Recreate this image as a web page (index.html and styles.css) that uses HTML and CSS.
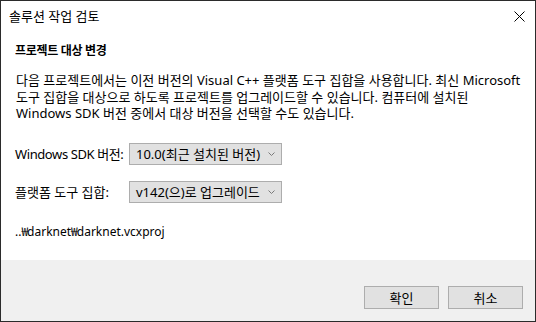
FILE: index.html
```html
<!DOCTYPE html>
<html lang="ko">
  <head>
    <meta charset="UTF-8" />
    <title>솔루션 작업 검토</title>
    <link rel="stylesheet" href="styles.css">
  </head>
  <body>
    <div class="window">
      <div class="titlebar">
        <span class="title">솔루션 작업 검토</span>
        <span class="close">
          <svg width="11" height="11" viewBox="0 0 11 11">
            <path d="M0.5 0.5 L10.5 10.5 M10.5 0.5 L0.5 10.5" stroke="#000" stroke-width="1" fill="none" />
          </svg>
        </span>
      </div>

      <div class="content">
        <h2>프로젝트 대상 변경</h2>
        <p class="desc">
          다음 프로젝트에서는 이전 버전의 Visual C++ 플랫폼 도구 집합을 사용합니다. 최신 Microsoft<br />
          도구 집합을 대상으로 하도록 프로젝트를 업그레이드할 수 있습니다. 컴퓨터에 설치된<br />
          Windows SDK 버전 중에서 대상 버전을 선택할 수도 있습니다.
        </p>

        <div class="field">
          <label class="label-latin">Windows SDK 버전:</label>
          <div class="select">
            <span>10.0(최근 설치된 버전)</span>
            <svg class="chev" width="7" height="4" viewBox="0 0 7 4">
              <path d="M0.5 0.5 L3.5 3.5 L6.5 0.5" stroke="#7a7a7a" fill="none" />
            </svg>
          </div>
        </div>
        <div class="field">
          <label>플랫폼 도구 집합:</label>
          <div class="select">
            <span>v142(으)로 업그레이드</span>
            <svg class="chev" width="7" height="4" viewBox="0 0 7 4">
              <path d="M0.5 0.5 L3.5 3.5 L6.5 0.5" stroke="#7a7a7a" fill="none" />
            </svg>
          </div>
        </div>

        <div class="path">..<span class="won">₩</span>darknet<span class="won">₩</span>darknet.vcxproj</div>
      </div>

      <div class="footer">
        <button>확인</button>
        <button>취소</button>
      </div>
    </div>
  </body>
</html>
```

FILE: styles.css
```css
:root {
  --border-color: #2b2b2b;
  --footer-bg: #f0f0f0;
  --control-bg: #e1e1e1;
  --control-border: #adadad;
  --text-color: #000000;
  --font-family: "Noto Sans", "Noto Sans CJK KR", sans-serif;
}

* {
  box-sizing: border-box;
}

body {
  margin: 0;
  font-family: var(--font-family);
  font-size: 13px;
  color: var(--text-color);
  background: #ffffff;
}

.window {
  width: 536px;
  height: 322px;
  border: 1px solid var(--border-color);
  background: #ffffff;
  display: flex;
  flex-direction: column;
}

.titlebar {
  height: 30px;
  display: flex;
  align-items: center;
  justify-content: space-between;
  padding: 0 10px 0 8px;
}

.title {
  line-height: 16px;
}

.close {
  display: flex;
  width: 11px;
  height: 11px;
}

.content {
  flex: 1;
  padding: 0 14px;
}

h2 {
  margin: 12px 0 0;
  font-size: 12px;
  font-weight: 700;
  line-height: 16px;
  letter-spacing: -0.3px;
}

.desc {
  margin: 13px 0 21px 1px;
  line-height: 16.5px;
  white-space: nowrap;
}

.field {
  display: flex;
  align-items: center;
  margin-bottom: 16px;
}

label {
  flex: none;
  width: 114px;
  line-height: 16px;
  white-space: nowrap;
}

.label-latin {
  letter-spacing: -0.4px;
}

.select {
  flex: none;
  width: 153px;
  height: 22px;
  background: var(--control-bg);
  border: 1px solid var(--control-border);
  display: flex;
  align-items: center;
  justify-content: space-between;
  padding: 0 6px;
  white-space: nowrap;
}

.chev {
  display: block;
}

.path {
  margin-top: 20px;
  line-height: 16px;
  font-size: 12px;
}

.won {
  font-family: "Noto Sans CJK KR", sans-serif;
  letter-spacing: -1px;
}

.footer {
  height: 61px;
  background: var(--footer-bg);
  display: flex;
  justify-content: flex-end;
  align-items: flex-start;
  gap: 9px;
  padding: 26px 12px 0 0;
}

button {
  width: 75px;
  height: 23px;
  background: var(--control-bg);
  border: 1px solid var(--control-border);
  font-family: var(--font-family);
  font-size: 13px;
  color: var(--text-color);
  padding: 0;
}
```
